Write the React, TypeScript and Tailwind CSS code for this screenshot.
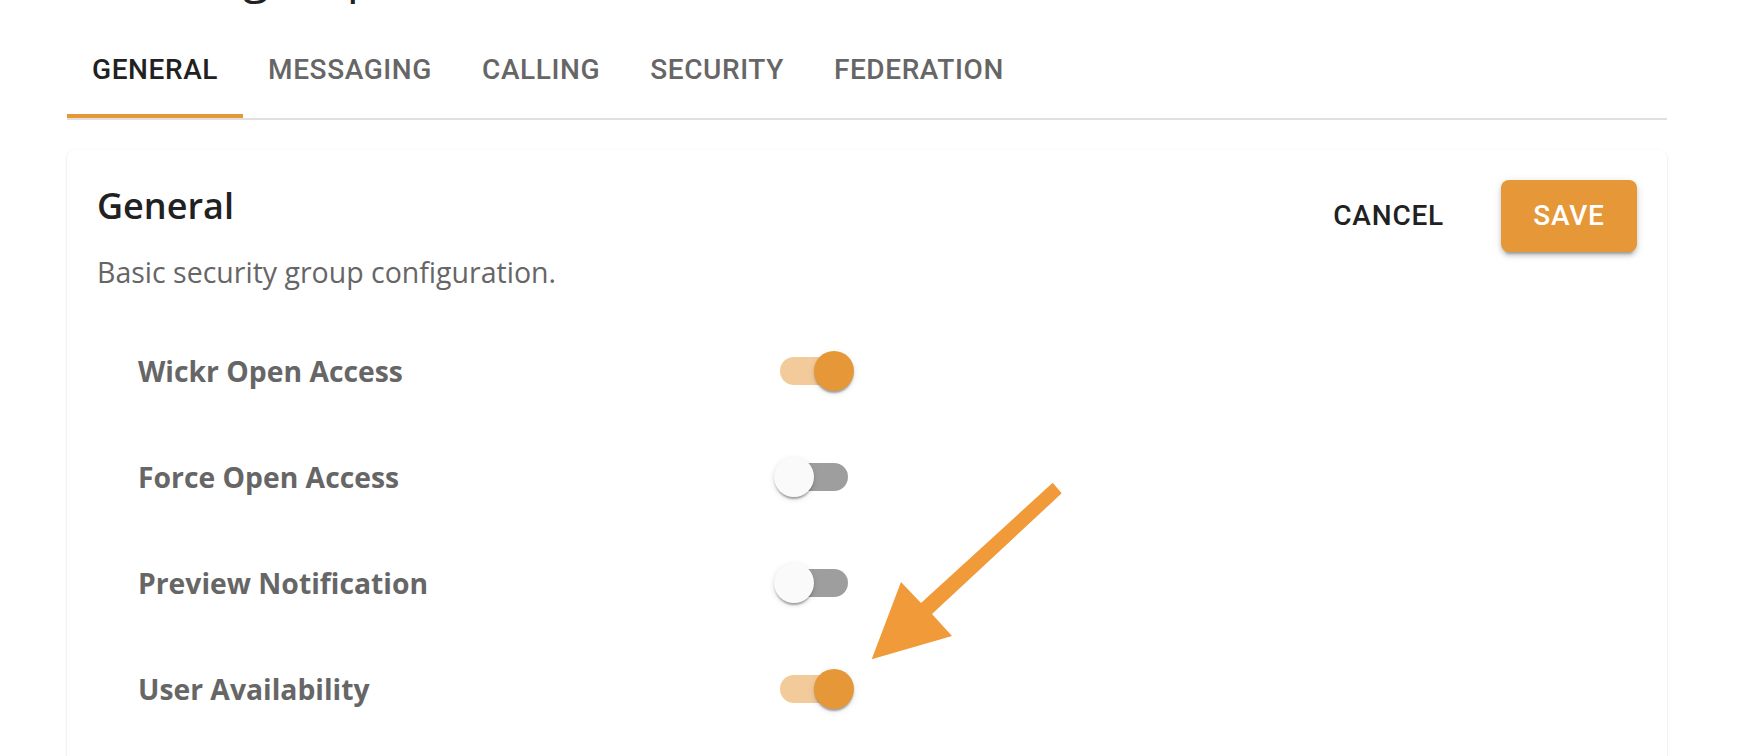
import React, { useState } from 'react'

const tabs = ['GENERAL', 'MESSAGING', 'CALLING', 'SECURITY', 'FEDERATION']

const settings = [
  { label: 'Wickr Open Access', on: true },
  { label: 'Force Open Access', on: false },
  { label: 'Preview Notification', on: false },
  { label: 'User Availability', on: true },
]

function Toggle({ on, onClick }: { on: boolean; onClick: () => void }) {
  return (
    <button onClick={onClick} className="relative w-[116px] h-[76px] shrink-0">
      <span className={'absolute left-[24px] top-[24px] w-[68px] h-[28px] rounded-full ' + (on ? 'bg-[#f3cb9b]' : 'bg-[#9e9e9e]')} />
      <span
        className={
          'absolute top-[18px] w-[40px] h-[40px] rounded-full shadow-[0_4px_2px_-2px_rgba(0,0,0,0.2),0_2px_2px_0_rgba(0,0,0,0.14),0_2px_6px_0_rgba(0,0,0,0.12)] ' +
          (on ? 'left-[58px] bg-[#e69737]' : 'left-[18px] bg-[#fafafa]')
        }
      />
    </button>
  )
}

export default function App() {
  const [tab, setTab] = useState(0)
  const [values, setValues] = useState(settings.map(s => s.on))

  return (
    <div className="relative h-screen overflow-hidden bg-white pl-[67px] pr-[73px]">
      <h1 className="-mt-[49px] h-[48px] leading-[48px] text-[48px] text-[#212121] font-['Open_Sans',sans-serif]">Default group</h1>

      <div className="mt-[23px] flex border-b-2 border-[#e0e0e0]">
        {tabs.map((t, i) => (
          <button
            key={t}
            onClick={() => setTab(i)}
            className={
              'relative h-[96px] px-[25px] text-[28px] font-medium tracking-[0.6px] font-["Roboto",sans-serif] ' +
              (tab === i ? 'text-[#212121]' : 'text-[#666666]')
            }
          >
            {t}
            {tab === i && <span className="absolute left-0 right-0 bottom-0 h-[4px] bg-[#e69737]" />}
          </button>
        ))}
      </div>

      <div className="mt-[30px] rounded-[8px] bg-white shadow-[0_1px_3px_rgba(0,0,0,0.12),0_1px_1px_rgba(0,0,0,0.06)] pb-[200px]">
        <div className="flex justify-between pt-[30px] pl-[30px] pr-[30px]">
          <div className="pt-[5px]">
            <h2 className="text-[36px] leading-[42px] font-semibold text-[#212121] font-['Open_Sans',sans-serif]">General</h2>
            <p className="mt-[27px] text-[28.5px] leading-[36px] text-[#666666] font-['Open_Sans',sans-serif]">Basic security group configuration.</p>
          </div>
          <div className="flex items-start">
            <button className="h-[72px] px-[16px] mr-[41px] text-[28px] font-medium tracking-[0.8px] text-[#212121] font-['Roboto',sans-serif]">CANCEL</button>
            <button className="h-[72px] w-[136px] rounded-[8px] bg-[#e69737] text-white text-[28px] font-medium tracking-[0.8px] font-['Roboto',sans-serif] shadow-[0_6px_2px_-4px_rgba(0,0,0,0.2),0_4px_4px_0_rgba(0,0,0,0.14),0_2px_10px_0_rgba(0,0,0,0.12)]">SAVE</button>
          </div>
        </div>

        <div className="mt-[28px] pl-[71px]">
          {settings.map((s, i) => (
            <div key={s.label} className="flex items-center h-[106px]">
              <span className="w-[618px] text-[28.3px] font-bold text-[#666666] font-['Open_Sans',sans-serif]">{s.label}</span>
              <Toggle on={values[i]} onClick={() => setValues(v => v.map((x, j) => (j === i ? !x : x)))} />
            </div>
          ))}
        </div>
      </div>

      <svg className="absolute left-0 top-0 pointer-events-none" width="1740" height="756" viewBox="0 0 1740 756">
        <polygon
          fill="#f09a3a"
          points="1052.7,482.7 921,603 901,582 871.7,659.3 952,636 932,614 1061.7,493.3"
        />
      </svg>
    </div>
  )
}
